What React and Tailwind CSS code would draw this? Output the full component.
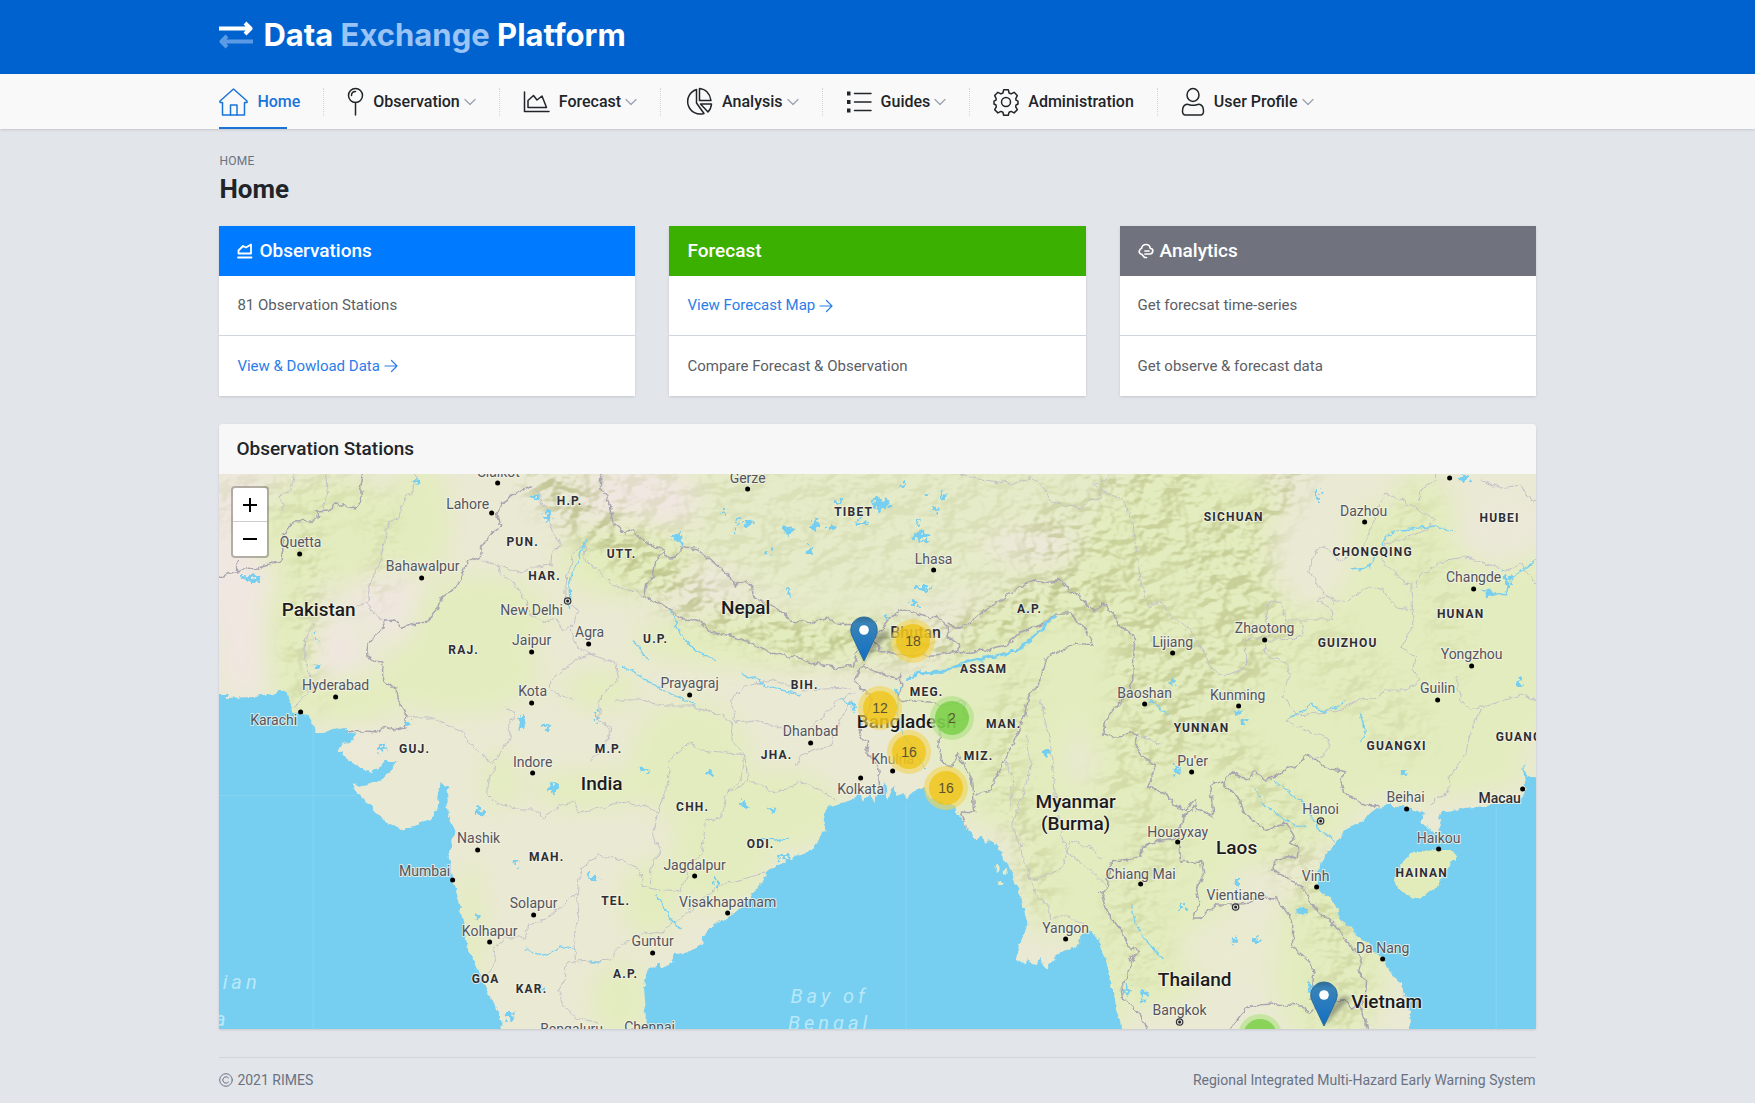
import React from 'react'

const navItems = [
  { label: 'Home', icon: HomeIcon, active: true },
  { label: 'Observation', icon: PinIcon, menu: true },
  { label: 'Forecast', icon: ChartIcon, menu: true },
  { label: 'Analysis', icon: PieIcon, menu: true },
  { label: 'Guides', icon: ListIcon, menu: true },
  { label: 'Administration', icon: GearIcon },
  { label: 'User Profile', icon: UserIcon, menu: true },
]

/* ---------- icons ---------- */

function Stroke({ w, h, sw = 1.5, className = '', children }) {
  return (
    <svg width={w} height={h} viewBox={`0 0 ${w} ${h}`} fill="none" stroke="currentColor" strokeWidth={sw}
      strokeLinejoin="round" strokeLinecap="round" className={`shrink-0 ${className}`} aria-hidden="true">
      {children}
    </svg>
  )
}

function HomeIcon() {
  return (
    <Stroke w={29} h={30}>
      <path d="M1 14 14.500 2 28 14v1.500h-2.500V28h-22V15.500H1z" />
      <path d="M11.500 28V18h6.500v10" />
    </Stroke>
  )
}

function PinIcon() {
  return (
    <Stroke w={17} h={30}>
      <circle cx="8.500" cy="8.500" r="7" />
      <path d="M8.500 15.500V28M4.500 8.500c0-2.500 1.700-4 4-4" />
    </Stroke>
  )
}

function ChartIcon() {
  return (
    <Stroke w={27} h={30}>
      <path d="M1.500 5v19.500H26M5 20.500v-7l5.500-5 3.500 4.500 5-4 4.500 11.500z" />
    </Stroke>
  )
}

function PieIcon() {
  return (
    <Stroke w={29} h={30}>
      <path d="M12.500 2.500A12.500 12.500 0 1 0 20 26.500L12.500 16z" />
      <path d="M15.500 1.500C21.500 2 26 6.500 27 13.500H15.500zM16.500 17h11c-.3 3.500-1.500 6-3.500 8z" />
    </Stroke>
  )
}

function ListIcon() {
  return (
    <Stroke w={26} h={30}>
      <path d="M8.500 6.500h16.500M8.500 15h16.500M8.500 23.500h16.500" />
      <g fill="currentColor" stroke="none">
        <rect x="1" y="4.500" width="3.500" height="4" />
        <rect x="1" y="13" width="3.500" height="4" />
        <rect x="1" y="21.500" width="3.500" height="4" />
      </g>
    </Stroke>
  )
}

function GearIcon() {
  return (
    <Stroke w={26} h={30}>
      <circle cx="13" cy="15" r="4.500" />
      <path d="M10.700 2.800h4.600l.8 3.200 2 .9 3-1.600 3.200 3.300-1.500 3 .2 1.600 2 1v2.800l-2 1-.3 1.800 1.600 2.900-3.200 3.200-3-1.500-2 .9-.8 2.900h-4.600l-.8-2.900-2-.9-3 1.500-3.200-3.200 1.600-2.900-.3-1.800-2-1v-2.800l2-1 .2-1.600-1.500-3 3.200-3.300 3 1.600 2-.9z" />
    </Stroke>
  )
}

function UserIcon() {
  return (
    <Stroke w={24} h={30}>
      <ellipse cx="12" cy="8" rx="6" ry="6.500" />
      <path d="M5 17.500c2-.8 3.500.8 7 .8s5-1.600 7-.8c2.500 1 3.500 3.500 3.500 6.500 0 3-1 4-3 4h-15c-2 0-3-1-3-4 0-3 1-5.500 3.500-6.500z" />
    </Stroke>
  )
}

function Chevron() {
  return (
    <Stroke w={12} h={8} sw={1.2} className="ml-1 text-gray-400">
      <path d="M1 1.500 6 6.500l5-5" />
    </Stroke>
  )
}

function Arrow() {
  return (
    <Stroke w={14} h={14} sw={1.2}>
      <path d="M1 7h12M7.500 1.500 13 7l-5.500 5.500" />
    </Stroke>
  )
}

function AreaIcon() {
  return (
    <Stroke w={16} h={16} sw={1.8}>
      <path d="M1.500 10.500V7.500L6 3l3 1.500L14 1.500v9zM1 14.500h13.500" />
    </Stroke>
  )
}

function CloudIcon() {
  return (
    <Stroke w={16} h={16} sw={1.7}>
      <path d="M4 11.500C1.500 11 .8 9 1.500 7.500 2 6 3 5.500 3.500 5.500 4 3 6 1.500 8 1.500c2.500 0 4 1.500 4.300 4 1.700 0 2.500 1 2.500 2.300 0 1.500-1 3.200-3 3.200H7M7 8h4M4 11.500l2.500 3h2" />
    </Stroke>
  )
}

function LogoIcon() {
  return (
    <svg width="34" height="28" viewBox="0 0 34 28" fill="none" strokeWidth="4" strokeLinejoin="round" aria-hidden="true">
      <path d="M0 7.500h30M26 2 31.500 7.500 26 13" stroke="#fff" />
      <path d="M34 20.500H4M8 15 2.500 20.500 8 26" stroke="#5b9be6" />
    </svg>
  )
}

/* ---------- map data, in map units (x 218-1535, y 474-1029) ---------- */

const seas = [
  'M200 694 227 694 225 698 253 697 275 695 277 691 285 691 288 696 290 707 293 713 308 715 312 723 315 733 323 733 333 729 345 727 348 732 357 734 352 742 342 743 338 750 345 758 360 768 370 772 380 767 385 761 397 761 392 768 382 778 370 783 358 786 352 783 353 789 370 807 383 820 400 830 413 827 427 820 433 816 437 807 438 795 440 782 443 785 449 787 446 790 447 800 447 813 452 823 455 833 451 845 448 857 451 870 453 883 457 900 462 920 465 937 468 953 477 970 483 985 490 997 497 1012 502 1029 502 1050 200 1050z',
  'M645 1050 645 1007 643 983 647 970 658 964 663 968 670 963 675 953 690 951 702 943 701 937 710 927 727 917 735 912 743 905 750 897 763 877 777 865 793 857 810 850 818 840 825 830 822 818 827 808 843 803 855 798 858 790 861 803 868 792 873 802 880 788 884 783 887 800 893 786 897 796 903 793 907 799 917 787 923 786 928 797 937 800 955 808 962 822 968 832 975 840 980 836 985 843 990 840 998 850 1003 852 1003 860 1010 868 1012 880 1018 890 1023 907 1027 925 1022 937 1018 950 1015 960 1025 963 1028 957 1031 964 1037 965 1040 957 1045 968 1055 958 1067 950 1077 945 1083 933 1092 932 1100 943 1103 957 1108 970 1110 987 1115 1007 1120 1025 1123 1050z',
  'M1550 782 1528 777 1523 763 1523 773 1525 790 1517 802 1493 805 1477 807 1463 808 1448 812 1440 809 1437 817 1443 820 1437 827 1438 835 1428 830 1422 822 1423 812 1412 808 1400 807 1390 805 1378 808 1367 815 1362 822 1348 827 1340 835 1335 845 1327 853 1320 863 1318 873 1317 887 1327 897 1337 907 1338 917 1353 933 1367 943 1383 960 1390 973 1400 983 1405 1000 1410 1017 1411 1050 1550 1050z',
]

const hainan = 'M1410 853 1420 852 1433 850 1450 850 1456 857 1450 865 1443 875 1438 885 1428 893 1418 898 1403 893 1395 883 1397 872 1403 860z'

const borders = [
  'M210 579 219 577 235 571 257 568 280 562 282 552 283 535 293 522 310 521 318 516 317 511 328 510 335 505 355 508 361 501 360 485 363 474',
  'M237 571 237 558',
  'M533 485 518 492 500 503 497 515 500 526 492 532 481 547 480 557 467 562 462 575 456 587 441 598 438 608 430 617 427 622 410 624 400 628 395 620 385 621 380 630 367 645 366 656 372 661 382 662 382 680 395 688 397 700 407 717 405 728 395 730 385 727 378 732 347 730 345 738 332 738 330 746',
  'M600 474 600 487 608 502 612 522 625 533 632 530 643 540 665 551 668 558 675 557 680 547 697 550 710 560 725 573 735 585 745 580 750 585 752 597 765 603 775 607 790 620 810 622 825 618 840 624 855 625',
  'M665 551 655 560 653 575 645 585 643 595 655 603 668 608 680 618 700 622 710 632 735 637 755 645 770 653 795 657 815 664 840 668 853 665 857 650 855 628 875 622',
  'M872 640 880 630 890 618 900 611 918 614 935 618 945 625 948 638 958 645 957 652 935 655 900 655 880 650z',
  'M948 624 960 628 972 620 985 610 1000 600 1015 590 1030 580 1045 583 1060 580 1070 590 1085 603 1094 612 1102 605 1113 612 1118 625 1130 632 1134 640 1133 660 1132 680 1125 695 1105 720 1102 735 1110 737 1137 733 1135 745 1145 760 1155 765 1147 788 1165 793 1172 805 1185 810 1195 800 1197 810 1213 817 1212 800 1209 785 1213 782 1223 783 1232 772 1245 780 1255 772 1265 780 1275 775 1290 768 1308 755 1325 768 1346 772 1340 780 1343 793 1360 803 1378 807',
  'M958 652 985 650 1005 645 1020 632 1040 625 1055 614 1070 614 1085 630 1092 645 1075 643 1045 658 1040 680 1027 697 1024 715 1015 738 1008 752 1000 770 990 790 975 795',
  'M863 664 855 680 860 690 870 693 872 705 862 718 858 738 868 740 866 752 877 765 878 790 881 803',
  'M863 667 885 675 895 680 900 675 900 690 898 700 915 702 945 704 962 702 968 720 940 724 938 745 941 760 950 767 957 755 965 768 972 780 974 813 960 812 966 832',
  'M1223 783 1240 800 1243 812 1253 820 1265 830 1285 823 1293 835 1290 843 1298 848 1295 857 1277 859 1270 870 1285 877 1302 887 1310 902 1325 917 1340 932 1348 945 1362 957 1358 972 1366 980 1365 992 1360 1005 1367 1029',
  'M1197 805 1183 815 1178 840 1180 863 1200 861 1202 875 1196 890 1198 903 1193 918 1200 918 1215 905 1230 905 1250 903 1260 897 1275 898 1292 920 1292 947 1310 962 1313 975 1310 1000 1345 1000 1350 1008 1362 1004',
  'M1178 838 1160 840 1142 847 1140 857 1110 862 1107 885 1100 892 1105 910 1120 930 1128 945 1138 952 1130 960 1128 978 1120 985 1122 998 1140 1015 1145 1029',
  'M1230 1029 1240 1015 1250 1005 1275 1004 1300 1006 1310 1012 1320 1003',
]

const stateLines = [
  'M415 474 412 490 400 508 398 520 386 523 384 545 376 570 368 585 370 600 365 604 378 616 382 622',
  'M283 510 278 498 290 490 294 474M325 474 327 495 322 510M365 604 355 606',
  'M313 622 305 640 304 660 310 678 306 695 292 708',
  'M535 487 545 510 552 530 560 545 551 555 550 565 530 568 520 572 500 566 481 560',
  'M498 562 500 575 515 585 525 600 530 614 542 622 555 617 562 630 573 625 577 610 565 600 566 575 572 555 585 543',
  'M585 543 583 560 600 572 612 585 630 590 645 598',
  'M407 717 430 717 445 725 460 730 470 745 485 758 495 765 488 782 487 795',
  'M503 708 515 712 508 725 510 738 497 757 493 762M570 628 575 645 590 655 615 662 618 680 600 695 598 718 610 728 605 745 590 760',
  'M572 700 550 690 550 680 575 660 595 654',
  'M615 700 640 700 665 706 690 706 720 715 732 722 730 740 745 755 740 780 725 795',
  'M487 795 495 802 520 810 538 810 542 820 555 808 575 802 578 812 600 808 620 803 645 806 657 812 653 835 660 850 650 870 650 884',
  'M578 882 582 868 597 855 622 860 640 870 642 885 652 888 680 892 690 862 700 855',
  'M578 882 577 893 570 898 545 920 527 925 525 938 505 938 492 950 497 960 490 970 484 975',
  'M577 893 578 915 573 940 575 962M575 962 565 965 565 980 558 990 562 1005 575 1018 598 1024',
  'M575 962 610 960 618 945 640 935 660 932 680 918 695 905 720 885 745 878 765 873',
  'M657 812 668 780 668 760 690 742 700 750 745 755M745 755 748 780 725 795 722 817 705 822 702 845 700 855',
  'M748 780 775 793 800 782 820 790 835 800M735 722 755 720 780 728 800 735 812 725 830 710 838 700 855 692',
  'M735 722 730 700 745 686 775 680 800 690 850 688',
  'M795 765 800 755 830 745 838 725 850 700',
  'M1100 490 1120 497 1132 520 1137 560 1142 590 1148 608 1160 600 1172 620 1185 625 1200 645 1210 668 1225 676 1245 668 1245 640 1270 635 1265 612 1270 600 1280 603 1285 620 1300 620 1303 635 1280 640 1265 640 1265 655 1285 662 1290 675 1283 695 1295 715',
  'M960 474 985 480 1010 484 1030 478 1045 490 1050 503 1080 508 1088 500 1100 498 1095 485 1110 474',
  'M1300 620 1332 620 1330 608 1315 602 1325 596 1345 603 1368 585 1382 590 1395 608 1412 610 1410 585 1395 575 1380 560 1385 545 1400 540 1425 530 1433 520 1425 512 1400 500 1385 493 1375 510 1370 530 1360 550 1340 562 1325 547 1315 550 1308 572 1320 590 1335 603',
  'M1412 610 1412 625 1400 648 1415 655 1412 670 1420 680 1405 690 1385 690 1370 700 1360 698 1345 708 1330 712 1295 715 1285 720 1305 730 1328 740 1325 755 1310 760',
  'M1412 590 1420 575 1445 560 1465 557 1490 565 1505 570 1520 565 1536 585M1455 676 1460 700 1470 710 1490 705 1505 700 1520 695 1536 700',
  'M1480 710 1470 730 1465 755 1450 775 1448 792 1435 798 1430 805M1420 500 1420 488 1435 480 1435 474M1480 480 1500 488 1520 485 1530 500 1536 502',
  'M1010 805 1012 780 1005 760M1040 700 1050 745 1055 800 1065 850 1090 870 1105 885M1032 880 1060 870 1070 840 1095 850 1100 860',
  'M1138 735 1150 740 1160 745M1027 735 1030 770 1012 825 1030 880 1035 895 1048 905 1050 920 1065 915 1085 925',
]

const rivers = [
  'M570 610 568 580 578 560 585 540M620 665 640 675 660 690 680 698 695 706',
  'M670 610 680 635 695 650 715 660M740 672 755 680 770 688 800 694M840 697 850 705 852 712',
  'M898 690 897 710 900 730 910 745 925 770',
  'M1385 535 1400 530 1420 528 1435 526 1455 532M1385 535 1380 550 1365 568 1350 570',
  'M1480 590 1505 595 1510 578 1536 560M1253 788 1265 805 1285 820 1305 828',
  'M1290 717 1310 705 1325 712 1345 702M1360 715 1365 735 1360 742',
  'M524 950 543 956 562 946 575 950M588 960 600 962M760 838 775 840 788 838',
  'M1131 905 1135 925 1148 945 1162 958M1272 780 1300 800 1320 830 1335 842',
  'M655 895 668 915 680 930M1150 700 1168 715M632 640 640 650 648 660',
]

// x, y, rx, ry
const lakes = [
  [250, 578, 10, 3], [880, 504, 9, 6], [788, 530, 7, 4], [815, 525, 4, 6], [748, 523, 5, 3], [722, 512, 5, 2], [677, 538, 6, 4],
  [921, 536, 9, 4], [860, 523, 6, 2], [838, 501, 3, 2], [926, 495, 3, 2], [943, 497, 2, 3], [935, 509, 2, 3], [919, 521, 2, 3], [903, 484, 3, 2],
  [830, 528, 5, 2], [809, 550, 2, 4], [767, 552, 2, 4], [788, 592, 2, 4], [923, 588, 8, 3], [914, 603, 4, 2], [737, 521, 2, 2], [735, 531, 2, 3],
  [546, 727, 3, 3], [521, 722, 3, 7], [596, 715, 2, 6], [553, 788, 4, 6], [479, 813, 5, 4], [593, 878, 4, 3], [515, 863, 3, 2], [741, 804, 5, 3],
  [772, 810, 3, 3], [710, 772, 3, 4], [381, 746, 3, 4], [783, 857, 5, 2], [508, 1015, 4, 4], [541, 987, 3, 2], [407, 725, 3, 3], [1045, 753, 3, 4],
  [1507, 580, 3, 7], [1489, 593, 4, 2], [1464, 478, 6, 3], [1317, 495, 2, 5], [1237, 714, 2, 4], [1243, 722, 2, 4], [1172, 683, 2, 4],
  [1176, 770, 4, 5], [1301, 910, 6, 3], [1237, 882, 3, 5], [1181, 907, 4, 3], [1233, 941, 3, 3], [1256, 940, 3, 3], [1127, 990, 2, 6],
  [1143, 996, 2, 7], [1309, 987, 2, 4], [1519, 683, 2, 4], [535, 498, 3, 3], [548, 516, 3, 4], [416, 482, 2, 3], [315, 637, 2, 3], [317, 666, 3, 2],
  [887, 615, 2, 2], [896, 690, 2, 3], [854, 706, 2, 5], [1404, 774, 3, 2], [476, 916, 2, 5], [644, 770, 5, 2], [716, 882, 2, 4],
]

const greens = [
  [330, 530, 80, 55], [290, 640, 26, 90], [420, 520, 30, 60], [480, 615, 70, 40], [460, 670, 80, 45], [350, 700, 50, 25], [600, 690, 40, 20],
  [625, 560, 70, 40], [780, 640, 150, 30], [690, 760, 60, 60], [720, 850, 50, 60], [780, 810, 60, 40], [590, 790, 60, 20], [470, 930, 14, 70],
  [650, 900, 30, 40], [1000, 720, 70, 110], [1050, 850, 35, 90], [1050, 640, 90, 50], [1200, 640, 140, 180], [1220, 800, 140, 70],
  [1420, 640, 160, 140], [1150, 900, 80, 110], [1330, 960, 60, 90], [1240, 540, 40, 60], [1420, 510, 30, 40], [620, 1000, 30, 40],
  [1420, 875, 40, 30], [1400, 770, 130, 30], [930, 700, 60, 16], [500, 780, 20, 30], [1110, 1000, 14, 50],
]

const pinks = [
  [240, 560, 40, 90], [260, 660, 40, 35], [400, 600, 50, 25], [640, 500, 60, 35], [335, 660, 22, 40], [420, 640, 40, 14],
  [1030, 545, 50, 12], [365, 740, 20, 8], [700, 580, 40, 10],
]

// mountain belts: path, width, strength
const ranges = [
  ['M600 480 760 520 900 530 1040 530', 130, '#333'],
  ['M540 480 600 530 650 575 720 615 800 640 870 645 940 640 1000 620 1060 595 1100 610', 36, '#aaa'],
  ['M1060 540 1120 570 1150 640 1150 740', 70, '#777'],
  ['M1130 480 1200 530 1230 580 1240 640 1180 700', 90, '#777'],
  ['M1290 474 1260 520 1235 570', 40, '#888'],
  ['M305 520 312 580 300 650 305 700', 20, '#777'],
  ['M380 500 383 580 370 600', 14, '#777'],
  ['M1020 680 1000 760 1030 850 1040 900', 30, '#666'],
  ['M1220 740 1270 800 1300 870 1345 950 1340 1020', 44, '#555'],
  ['M1120 780 1160 850 1130 900 1140 960', 50, '#444'],
  ['M1420 500 1400 540 1440 580 1450 660', 34, '#333'],
  ['M1320 640 1400 730M240 500 330 490', 60, '#333'],
]

const countries = [
  [318, 616, 'Pakistan'], [745, 614, 'Nepal'], [601, 790, 'India'], [1075, 808, 'Myanmar'], [1075, 830, '(Burma)'],
  [1236, 854, 'Laos'], [1194, 986, 'Thailand'], [1386, 1008, 'Vietnam'], [906, 728, 'Bangladesh'],
]

const states = [
  [569, 505, 'H.P.'], [522, 546, 'PUN.'], [544, 580, 'HAR.'], [621, 558, 'UTT.'], [463, 654, 'RAJ.'], [655, 643, 'U.P.'], [414, 753, 'GUJ.'],
  [608, 753, 'M.P.'], [692, 811, 'CHH.'], [760, 848, 'ODI.'], [546, 861, 'MAH.'], [615, 905, 'TEL.'], [485, 983, 'GOA'], [531, 993, 'KAR.'],
  [625, 978, 'A.P.'], [804, 689, 'BIH.'], [776, 759, 'JHA.'], [926, 696, 'MEG.'], [983, 673, 'ASSAM'], [1003, 728, 'MAN.'], [978, 760, 'MIZ.'],
  [1029, 613, 'A.P.'], [853, 516, 'TIBET'], [1233, 521, 'SICHUAN'], [1372, 556, 'CHONGQING'], [1499, 522, 'HUBEI'], [1460, 618, 'HUNAN'],
  [1347, 647, 'GUIZHOU'], [1201, 732, 'YUNNAN'], [1396, 750, 'GUANGXI'], [1421, 877, 'HAINAN'],
]

// label x, baseline, name, dot x, dot y, capital
const cities = [
  [467, 509, 'Lahore', 491, 513], [498, 477, 'Sialkot', 497, 483], [300, 547, 'Quetta', 299, 554], [422, 571, 'Bahawalpur', 421, 578],
  [531, 615, 'New Delhi', 567, 601, true], [531, 645, 'Jaipur', 531, 652], [589, 637, 'Agra', 588, 644], [532, 696, 'Kota', 531, 703],
  [335, 690, 'Hyderabad', 335, 697], [273, 725, 'Karachi', 300, 712], [532, 767, 'Indore', 532, 773], [478, 843, 'Nashik', 477, 850],
  [424, 876, 'Mumbai', 452, 880], [533, 908, 'Solapur', 533, 915], [489, 936, 'Kolhapur', 489, 942], [652, 946, 'Guntur', 652, 953],
  [694, 870, 'Jagdalpur', 694, 876], [727, 907, 'Visakhapatnam', 727, 913], [810, 736, 'Dhanbad', 810, 743], [860, 794, 'Kolkata', 860, 778],
  [689, 688, 'Prayagraj', 689, 695], [747, 483, 'Gerze', 747, 489], [933, 564, 'Lhasa', 933, 570], [1363, 516, 'Dazhou', 1364, 522],
  [1473, 582, 'Changde', 1473, 589], [1264, 633, 'Zhaotong', 1264, 640], [1172, 647, 'Lijiang', 1172, 653], [1471, 659, 'Yongzhou', 1471, 666],
  [1144, 698, 'Baoshan', 1144, 704], [1237, 700, 'Kunming', 1238, 706], [1437, 693, 'Guilin', 1437, 700], [1192, 766, "Pu'er", 1191, 772],
  [1320, 814, 'Hanoi', 1320, 821, true], [1405, 802, 'Beihai', 1406, 809], [1438, 843, 'Haikou', 1438, 849], [1177, 837, 'Houayxay', 1177, 842],
  [1140, 879, 'Chiang Mai', 1140, 884], [1235, 900, 'Vientiane', 1235, 907, true], [1315, 881, 'Vinh', 1316, 887], [1382, 953, 'Da Nang', 1382, 959],
  [1179, 1015, 'Bangkok', 1179, 1022, true], [1065, 933, 'Yangon', 1065, 939], [892, 764, 'Khulna', 892, 771], [571, 1034, 'Bengaluru', 571, 1050],
  [649, 1032, 'Chennai', 650, 1050],
]

const clusters = [
  { x: 912, y: 641, n: 18 },
  { x: 879, y: 708, n: 12 },
  { x: 951, y: 718, n: 2 },
  { x: 908, y: 752, n: 16 },
  { x: 945, y: 788, n: 16 },
  { x: 1259, y: 1036, n: 8 },
]

const pins = [{ x: 863, y: 662 }, { x: 1323, y: 1027 }]

const place = (x, y) => ({ left: `${((x - 218) / 1317) * 100}%`, top: y - 474 })

function MapCanvas() {
  return (
    <svg className="block h-full w-full" viewBox="218 474 1317 555" preserveAspectRatio="xMidYMid slice" role="img" aria-label="Map of South Asia">
      <defs>
        <filter id="soft" filterUnits="userSpaceOnUse" x="150" y="400" width="1450" height="700"><feGaussianBlur stdDeviation="12" /></filter>
        <filter id="rough" filterUnits="userSpaceOnUse" x="200" y="460" width="1350" height="590">
          <feTurbulence type="fractalNoise" baseFrequency="0.12" numOctaves="3" seed="4" />
          <feDisplacementMap in="SourceGraphic" scale="7" xChannelSelector="R" yChannelSelector="G" />
        </filter>
        <filter id="ragged" filterUnits="userSpaceOnUse" x="200" y="460" width="1350" height="590">
          <feTurbulence type="fractalNoise" baseFrequency="0.2" numOctaves="2" seed="9" />
          <feDisplacementMap in="SourceGraphic" scale="14" xChannelSelector="R" yChannelSelector="G" />
        </filter>
        <filter id="relief" filterUnits="userSpaceOnUse" x="200" y="460" width="1350" height="590" colorInterpolationFilters="sRGB">
          <feTurbulence type="fractalNoise" baseFrequency="0.04 0.055" numOctaves="3" seed="11" result="n" />
          <feDiffuseLighting in="n" surfaceScale="8" diffuseConstant="1.1" lightingColor="#ffffff" result="l">
            <feDistantLight azimuth="225" elevation="60" />
          </feDiffuseLighting>
          <feColorMatrix in="l" type="matrix" values="0 0 0 0 0.68  0 0 0 0 0.7  0 0 0 0 0.45  -2.4 0 0 0 2.4" />
          <feGaussianBlur stdDeviation="0.7" />
        </filter>
        <mask id="belts" maskUnits="userSpaceOnUse" x="200" y="460" width="1350" height="590">
          <g filter="url(#soft)" fill="none" strokeLinecap="round">
            {ranges.map(([d, w, c]) => <path key={d} d={d} stroke={c} strokeWidth={w} />)}
          </g>
        </mask>
      </defs>

      <rect x="200" y="460" width="1350" height="590" fill="#eae9d4" />
      <g filter="url(#soft)">
        <path d="M640 440H1170L1200 540 1130 620 980 590 860 610 760 590 660 540z" fill="#e5ebc8" />
        {pinks.map(([x, y, rx, ry]) => <ellipse key={`${x}-${y}`} cx={x} cy={y} rx={rx} ry={ry} fill="#f0e7e1" />)}
        {greens.map(([x, y, rx, ry]) => <ellipse key={`${x}-${y}`} cx={x} cy={y} rx={rx} ry={ry} fill="#e3ecbe" />)}
        <ellipse cx="1310" cy="550" rx="42" ry="58" fill="#eae9d4" />
        <ellipse cx="1500" cy="530" rx="45" ry="35" fill="#ebe8d8" />
        <ellipse cx="1230" cy="950" rx="50" ry="35" fill="#e9ead0" />
      </g>
      <g mask="url(#belts)">
        <rect x="200" y="460" width="1350" height="590" filter="url(#relief)" />
      </g>

      <g filter="url(#rough)">
        <g fill="none" stroke="#c3c1c8" strokeWidth="1">
          {stateLines.map(d => <path key={d} d={d} />)}
        </g>
        <g fill="none" stroke="#a8a5b0" strokeWidth="1.500">
          {borders.map(d => <path key={d} d={d} />)}
        </g>
        <g fill="#76cff0">
          {seas.map(d => <path key={d} d={d} />)}
        </g>
        <path d="M905 679 918 673 945 672 965 662 1015 652 1030 640 1045 624 1055 615" fill="none" stroke="#76cff0" strokeWidth="3" />
        <g fill="none" stroke="#76cff0" strokeWidth="1.300">
          {rivers.map(d => <path key={d} d={d} />)}
        </g>
        <path d={hainan} fill="#e2ebba" />
        <g fill="#e8ebc8">
          <ellipse cx="1000" cy="883" rx="3" ry="2" />
          <ellipse cx="997" cy="868" rx="2" ry="4" />
          <ellipse cx="1005" cy="872" rx="2" ry="4" />
        </g>
      </g>
      <g filter="url(#ragged)" fill="#76cff0">
        {lakes.map(([x, y, rx, ry]) => <ellipse key={`${x}-${y}`} cx={x} cy={y} rx={rx} ry={ry} />)}
      </g>
      <path d="M200 795.500H356M312.500 725V1029M905.500 802V1029M1495.500 806V1029" stroke="#84d4f2" fill="none" />

      <g textAnchor="middle" className="font-['Roboto','Open_Sans',sans-serif]" stroke="#f4f4e6" strokeOpacity="0.8" strokeWidth="2" strokeLinejoin="round">
        <g className="text-[14px]" fill="#55555e" style={{ paintOrder: 'stroke' }}>
          {cities.map(([x, y, name]) => <text key={name} x={x} y={y}>{name}</text>)}
        </g>
        <g className="text-[12px] font-bold tracking-widest" fill="#2e2e35" style={{ paintOrder: 'stroke' }}>
          {states.map(([x, y, name]) => <text key={`${x}${name}`} x={x} y={y}>{name}</text>)}
          <text x="1495" y="741" textAnchor="start">GUANGDONG</text>
        </g>
        <g className="text-[19px] font-medium" fill="#1c1c20" style={{ paintOrder: 'stroke' }}>
          {countries.map(([x, y, name]) => <text key={name} x={x} y={y}>{name}</text>)}
        </g>
        <g className="font-medium" fill="#2e2e35" style={{ paintOrder: 'stroke' }}>
          <text className="text-[16px]" x="915" y="638">Bhutan</text>
          <text className="text-[14px]" x="1499" y="803">Macau</text>
        </g>
      </g>
      <g className="font-['Roboto',sans-serif] text-[20px] italic tracking-[4px]" fill="#b9e8fa">
        <text x="260" y="989" textAnchor="end">Arabian</text>
        <text x="229" y="1026" textAnchor="end">Sea</text>
        <text x="829" y="1003" textAnchor="middle">Bay of</text>
        <text x="829" y="1030" textAnchor="middle">Bengal</text>
      </g>
      {cities.map(([, , name, x, y, capital]) => capital ? (
        <g key={name}>
          <circle cx={x} cy={y} r="3.200" fill="#ddd" stroke="#333" strokeWidth="1.200" />
          <circle cx={x} cy={y} r="1.500" fill="#222" />
        </g>
      ) : <circle key={name} cx={x} cy={y} r="2.500" fill="#000" />)}
      <circle cx="1522" cy="789" r="2.500" />
      <circle cx="1449" cy="478" r="2.500" />
    </svg>
  )
}

function StationMap() {
  return (
    <div className="relative h-[555px] overflow-hidden bg-[#76cff0]">
      <MapCanvas />

      {pins.map(p => (
        <button key={p.x} aria-label="Station" className="absolute -ml-3.5 -mt-[46px]" style={place(p.x, p.y)}>
          <svg width="46" height="46" viewBox="0 0 46 46" aria-hidden="true">
            <defs>
              <linearGradient id="pin" x1="0" y1="0" x2="0" y2="1">
                <stop offset="0" stopColor="#2e6c97" />
                <stop offset="0.15" stopColor="#3883b7" />
                <stop offset="1" stopColor="#126fc6" />
              </linearGradient>
              <filter id="blur"><feGaussianBlur stdDeviation="2" /></filter>
            </defs>
            <path d="M14 45 36 22c6-5 2-9-5-6L20 27z" fill="#000" opacity="0.32" filter="url(#blur)" />
            <path d="M14 1C7 1 .800 6.500.800 14c0 3.500 1.500 6.500 3 9.500L14 45l10.200-21.500c1.500-3 3-6 3-9.500C27.200 6.500 21 1 14 1z" fill="url(#pin)" stroke="#2e6c97" />
            <circle cx="14" cy="14" r="4.800" fill="#fff" />
          </svg>
        </button>
      ))}

      {clusters.map(c => (
        <button key={`${c.x}-${c.y}`} style={place(c.x, c.y)}
          className={`absolute -ml-[22px] -mt-[22px] rounded-full p-[5px] ${c.n < 10 ? 'bg-[#b5e28c]/70' : 'bg-[#f1d357]/60'}`}>
          <span className={`flex size-[34px] items-center justify-center rounded-full font-['Liberation_Sans',Arial,sans-serif] text-sm text-[#5a5330] ${c.n < 10 ? 'bg-[#6ecc39]/70' : 'bg-[#f0c20c]/70'}`}>
            {c.n}
          </span>
        </button>
      ))}

      <div className="absolute left-3 top-3 flex flex-col overflow-hidden rounded border-2 border-black/25 bg-white bg-clip-padding text-black">
        <button aria-label="Zoom in" className="flex h-[34px] w-[34px] items-center justify-center border-b border-[#ccc]">
          <svg width="14" height="14" viewBox="0 0 14 14" stroke="currentColor" strokeWidth="2"><path d="M0 7h14M7 0v14" /></svg>
        </button>
        <button aria-label="Zoom out" className="flex h-[34px] w-[34px] items-center justify-center">
          <svg width="14" height="14" viewBox="0 0 14 14" stroke="currentColor" strokeWidth="2"><path d="M0 7h14" /></svg>
        </button>
      </div>
    </div>
  )
}

function Card({ title, icon, head, children }) {
  return (
    <section className="bg-white shadow">
      <h2 className={`flex h-[50px] items-center gap-1.5 px-[18px] text-[19px] font-medium text-white ${head}`}>
        {icon}
        {title}
      </h2>
      <ul className="divide-y divide-gray-300 text-[15px] text-[#5a6066]">{children}</ul>
    </section>
  )
}

function Row({ link, children }) {
  return (
    <li className="flex h-[60px] items-center px-[18px]">
      {link ? <a href="#" className="flex items-center gap-1 text-[#2b7de9]">{children}<Arrow /></a> : children}
    </li>
  )
}

export default function App() {
  return (
    <div className="min-h-screen bg-[#e2e5ea] font-['Roboto',sans-serif] text-[#212529]">
      <header className="bg-[#0062cf]">
        <a href="#" className="mx-auto flex h-[74px] w-3/4 items-center gap-2.5 pb-1 font-['Inter',sans-serif] text-[31px] font-bold text-white">
          <LogoIcon />
          <span>Data <span className="text-[#99c4f5]">Exchange</span> Platform</span>
        </a>
      </header>

      <nav className="bg-[#f9f9f9] shadow">
        <ul className="mx-auto flex h-[55px] w-3/4 text-base font-medium">
          {navItems.map(({ label, icon: Icon, menu, active }, i) => {
            const Tag = menu ? 'button' : 'a'
            return (
              <li key={label} className="flex items-center">
                {i > 0 && <span className="mx-[23px] h-7 border-l border-dotted border-gray-300" />}
                <Tag href={menu ? undefined : '#'}
                  className={`relative flex h-full items-center ${active ? 'text-[#1a73d9]' : ''}`}>
                  <Icon />
                  <span className="ml-[9px]">{label}</span>
                  {menu && <Chevron />}
                  {active && <span className="absolute bottom-0 left-0 h-0.5 w-[68px] bg-[#1a73d9]" />}
                </Tag>
              </li>
            )
          })}
        </ul>
      </nav>

      <main className="mx-auto w-3/4">
        <p className="pt-6 text-xs leading-4 tracking-wide text-gray-500">HOME</p>
        <h1 className="mt-0.5 mb-[19px] text-[26px] leading-9 font-bold">Home</h1>

        <div className="grid grid-cols-3 gap-[34px]">
          <Card title="Observations" icon={<AreaIcon />} head="bg-[#007bff]">
            <Row>81 Observation Stations</Row>
            <Row link>View &amp; Dowload Data</Row>
          </Card>
          <Card title="Forecast" head="bg-[#3bb001]">
            <Row link>View Forecast Map</Row>
            <Row>Compare Forecast &amp; Observation</Row>
          </Card>
          <Card title="Analytics" icon={<CloudIcon />} head="bg-[#70737d]">
            <Row>Get forecsat time-series</Row>
            <Row>Get observe &amp; forecast data</Row>
          </Card>
        </div>

        <section className="mt-7 overflow-hidden rounded-t shadow">
          <h2 className="flex h-[50px] items-center bg-[#f7f7f7] px-[17px] text-[19px] font-medium">Observation Stations</h2>
          <StationMap />
        </section>
      </main>

      <footer className="mx-auto mt-7 flex w-3/4 justify-between border-t border-gray-300 pt-3 text-sm text-gray-500">
        <span className="flex items-center gap-1">
          <Stroke w={14} h={14} sw={1}>
            <circle cx="7" cy="7" r="6.300" />
            <path d="M9.500 5a3.200 3.200 0 1 0 0 4" />
          </Stroke>
          2021 RIMES
        </span>
        <span>Regional Integrated Multi-Hazard Early Warning System</span>
      </footer>
    </div>
  )
}
